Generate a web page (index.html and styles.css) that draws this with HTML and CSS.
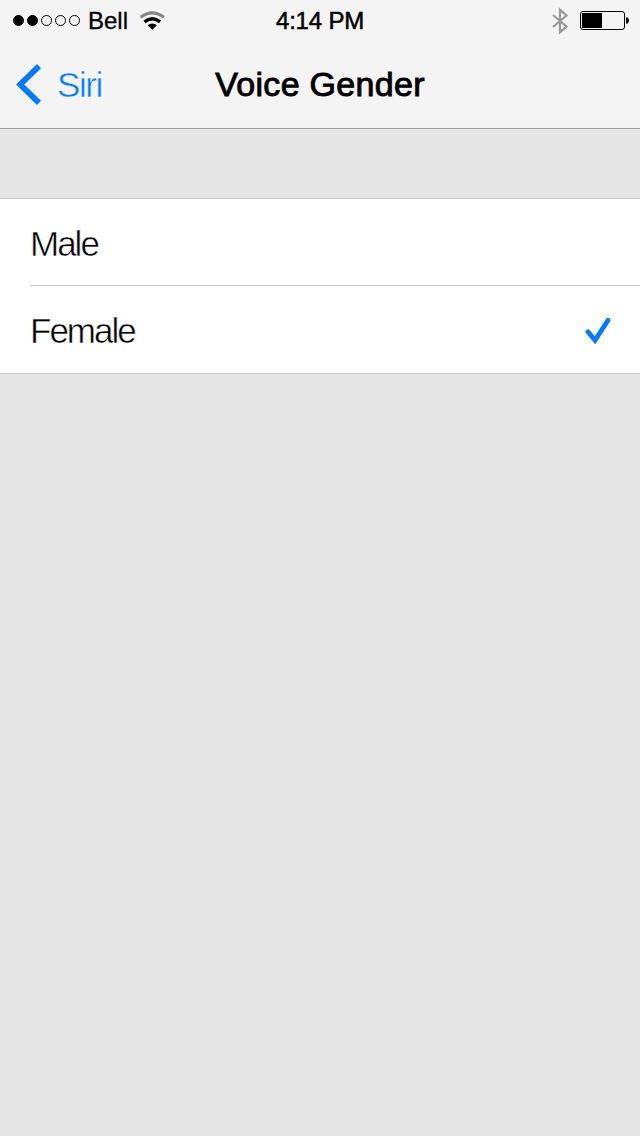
FILE: index.html
```html
<!DOCTYPE html>
<html lang="en">

<head>
    <meta charset="UTF-8">
    <meta name="viewport" content="width=device-width, initial-scale=1.0">
    <title>Voice Gender</title>
    <link rel="stylesheet" href="styles.css">
</head>

<body>
    <header class="header">
        <div class="status">
            <div class="status-left">
                <ul class="signal">
                    <li class="full"></li>
                    <li class="full"></li>
                    <li></li>
                    <li></li>
                    <li></li>
                </ul>
                <span class="carrier">Bell</span>
                <svg class="wifi" width="26" height="20" viewBox="0 0 26 20">
                    <path d="M1.6 6.3Q13 -2.6 25 6.3" fill="none" stroke="#858585" stroke-width="3" />
                    <path d="M5.5 10.8Q13.3 4.6 21.1 10.8" fill="none" stroke="#000" stroke-width="3.4" />
                    <path d="M8.7 14.3Q13.3 10.5 17.9 14.3L13.3 18.8Z" />
                </svg>
            </div>
            <span class="clock">4:14 PM</span>
            <div class="status-right">
                <svg class="bluetooth" width="18" height="28" viewBox="0 0 18 28">
                    <path d="M2 8L15.5 19.5L9 25.2V2.8L15.5 8.5L2 20" fill="none" stroke="#999" stroke-width="2.2" />
                </svg>
                <svg class="battery" width="50" height="20" viewBox="0 0 50 20">
                    <rect x="0.5" y="0.5" width="44" height="18" rx="2.5" fill="none" stroke="#000" />
                    <rect x="2" y="2" width="20" height="15" />
                    <path d="M46 6.3Q49 6.5 49 9.5T46 12.7Z" />
                </svg>
            </div>
        </div>
        <nav class="navbar">
            <a class="back">
                <svg width="26" height="42" viewBox="0 0 26 42">
                    <path d="M23 3.2L4.2 21.5L23 39.8" fill="none" stroke="#007aff" stroke-width="5.8" />
                </svg>
                <span>Siri</span>
            </a>
            <h1 class="title">Voice Gender</h1>
        </nav>
    </header>

    <ul class="options">
        <li class="option"><span>Male</span></li>
        <li class="option">
            <span>Female</span>
            <svg width="26" height="28" viewBox="0 0 26 28">
                <path d="M3 15.8L10 24.3L23 4.3" fill="none" stroke="#007aff" stroke-width="4.8" stroke-linecap="round" />
            </svg>
        </li>
    </ul>
</body>

</html>
```
FILE: styles.css
```css
* {
    padding: 0;
    margin: 0;
    box-sizing: border-box;
}

body {
    height: 1136px;
    background-color: #e5e5e5;
    color: #000;
    font-family: "Liberation Sans", Arial, sans-serif;
    overflow: hidden;
}

ul {
    list-style: none;
}

svg {
    display: block;
}

.header {
    height: 129px;
    background-color: #f4f4f4;
    border-bottom: 1px solid #a0a0a0;
}

.status,
.navbar {
    display: grid;
    grid-template-columns: 1fr auto 1fr;
    align-items: center;
}

.status {
    height: 41px;
    padding: 0 10px;
    font-size: 24px;
}

.status-left,
.status-right,
.signal,
.back {
    display: flex;
    align-items: center;
}

.status-right {
    justify-content: flex-end;
    gap: 11px;
}

.signal {
    gap: 3px;
    margin-left: 3px;
}

.signal li {
    width: 11px;
    height: 11px;
    border: 1px solid #000;
    border-radius: 50%;
}

.signal .full {
    background-color: #000;
}

.carrier {
    margin-left: 8px;
    -webkit-text-stroke: 0.3px #000;
}

.wifi {
    margin-left: 11px;
}

.clock {
    letter-spacing: -0.2px;
    -webkit-text-stroke: 0.5px #000;
}

.navbar {
    height: 86px;
    padding: 0 15px;
}

.back {
    gap: 15px;
    padding-left: 1px;
    color: #007aff;
    font-size: 35px;
    letter-spacing: -1.4px;
    /* thin the regular weight down to a light one */
    -webkit-text-stroke: 0.5px #f4f4f4;
}

.back span {
    padding-top: 1px;
}

.title {
    font-size: 34px;
    font-weight: normal;
    letter-spacing: 0.3px;
    -webkit-text-stroke: 0.9px #000;
}

.options {
    margin-top: 69px;
    background-color: #fff;
    border-top: 1px solid #c8c8c8;
    border-bottom: 1px solid #c8c8c8;
}

.option {
    display: flex;
    align-items: center;
    justify-content: space-between;
    height: 86px;
    margin-left: 30px;
    padding-right: 29px;
    font-size: 35px;
    letter-spacing: -2px;
    -webkit-text-stroke: 0.5px #fff;
}

.option span {
    padding-top: 3px;
}

.option + .option {
    height: 88px;
    border-top: 1px solid #c8c8c8;
}
```
